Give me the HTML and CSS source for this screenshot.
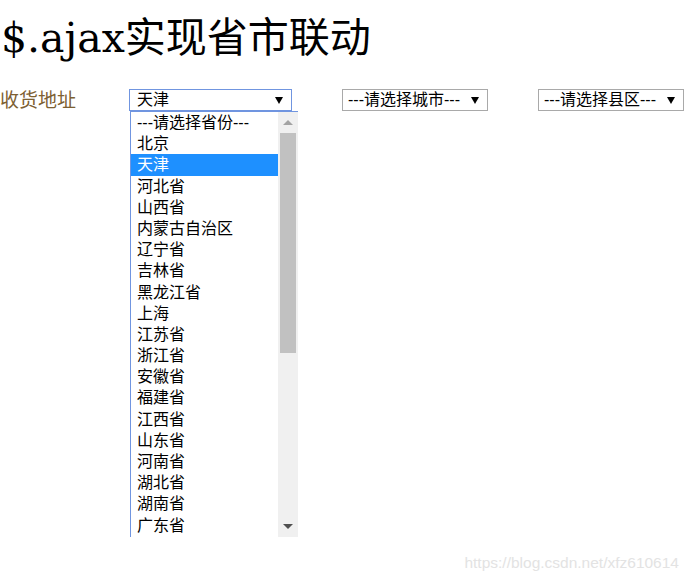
FILE: index.html
```html
<!DOCTYPE html>
<html lang="zh-CN">
<head>
<meta charset="utf-8">
<title>$.ajax实现省市联动</title>
<link rel="stylesheet" href="styles.css">
</head>
<body>
<h1 class="title">$.ajax实现省市联动</h1>
<div class="address-row">
  <span class="label">收货地址</span>
  <div class="select-wrap">
    <div class="select select--open"><span class="select-value">天津</span><span class="caret"></span></div>
    <div class="dropdown">
      <ul class="options">
        <li>---请选择省份---</li>
        <li>北京</li>
        <li class="is-selected">天津</li>
        <li>河北省</li>
        <li>山西省</li>
        <li>内蒙古自治区</li>
        <li>辽宁省</li>
        <li>吉林省</li>
        <li>黑龙江省</li>
        <li>上海</li>
        <li>江苏省</li>
        <li>浙江省</li>
        <li>安徽省</li>
        <li>福建省</li>
        <li>江西省</li>
        <li>山东省</li>
        <li>河南省</li>
        <li>湖北省</li>
        <li>湖南省</li>
        <li>广东省</li>
      </ul>
      <div class="scrollbar">
        <span class="sb-btn"><span class="sb-arrow sb-arrow--up"></span></span>
        <span class="sb-thumb"></span>
        <span class="sb-track"></span>
        <span class="sb-btn"><span class="sb-arrow sb-arrow--down"></span></span>
      </div>
    </div>
  </div>
  <div class="select select--city"><span class="select-value">---请选择城市---</span><span class="caret"></span></div>
  <div class="select select--county"><span class="select-value">---请选择县区---</span><span class="caret"></span></div>
</div>
<div class="watermark">https://blog.csdn.net/xfz610614</div>
</body>
</html>
```

FILE: styles.css
```css
html, body {
  margin: 0;
  padding: 0;
  background: #ffffff;
}

body {
  position: relative;
  width: 688px;
  height: 582px;
  overflow: hidden;
  font-family: "Liberation Sans", "Noto Sans CJK SC", sans-serif;
  color: #000;
}

.title {
  margin: 14px 0 0 0;
  padding-left: 1px;
  font-family: "DejaVu Serif", "Noto Sans CJK SC", serif;
  font-weight: normal;
  font-size: 41px;
  line-height: 48px;
  height: 48px;
  color: #000;
}

.address-row {
  display: flex;
  align-items: center;
  margin-top: 27px;
  height: 22px;
}

.label {
  width: 129px;
  flex: none;
  font-family: "Liberation Serif", "Noto Sans CJK SC", serif;
  font-size: 19px;
  line-height: 24px;
  padding-top: 1px;
  color: #7d6032;
}

.select-wrap {
  position: relative;
  flex: none;
  margin-right: 50px;
}

.select {
  box-sizing: border-box;
  height: 22px;
  display: flex;
  align-items: center;
  justify-content: space-between;
  border: 1px solid #a9a9a9;
  background: #fff;
  font-size: 16px;
  line-height: 20px;
  padding: 0 8px 0 5px;
  white-space: nowrap;
}

.select--open {
  width: 163px;
  border-color: #7095e0;
  padding-left: 7px;
  padding-right: 8px;
}

.select--city {
  width: 146px;
  margin-right: 50px;
  flex: none;
}

.select--county {
  width: 146px;
  flex: none;
}

.caret {
  width: 0;
  height: 0;
  border-left: 4px solid transparent;
  border-right: 4px solid transparent;
  border-top: 7px solid #000;
  margin-top: 1px;
}

.dropdown {
  position: absolute;
  left: 1px;
  top: 22px;
  width: 168px;
  height: 426px;
  box-sizing: border-box;
  border-top: 1px solid #7095e0;
  border-left: 1px solid #7095e0;
  background: #fff;
  display: flex;
  overflow: hidden;
}

.options {
  list-style: none;
  margin: 0;
  padding: 0;
  flex: 1;
  overflow: hidden;
}

.options li {
  height: 21.2px;
  line-height: 21.2px;
  padding-left: 6px;
  font-size: 16px;
  white-space: nowrap;
  color: #000;
}

.options li.is-selected {
  background: #1e90ff;
  color: #fff;
}

.scrollbar {
  width: 20px;
  flex: none;
  background: #f0f0f0;
  display: flex;
  flex-direction: column;
  align-items: center;
}

.sb-btn {
  height: 21px;
  width: 100%;
  display: flex;
  align-items: center;
  justify-content: center;
  flex: none;
}

.sb-arrow {
  width: 0;
  height: 0;
  border-left: 5px solid transparent;
  border-right: 5px solid transparent;
}

.sb-arrow--up {
  border-bottom: 5px solid #a3a3a3;
}

.sb-arrow--down {
  border-top: 5px solid #505050;
}

.sb-thumb {
  width: 16px;
  height: 220px;
  background: #c1c1c1;
  flex: none;
}

.sb-track {
  flex: 1;
}

.watermark {
  position: absolute;
  right: 9px;
  bottom: 10px;
  font-family: "Liberation Sans", sans-serif;
  font-size: 15.5px;
  color: #e3e3e3;
}
```
